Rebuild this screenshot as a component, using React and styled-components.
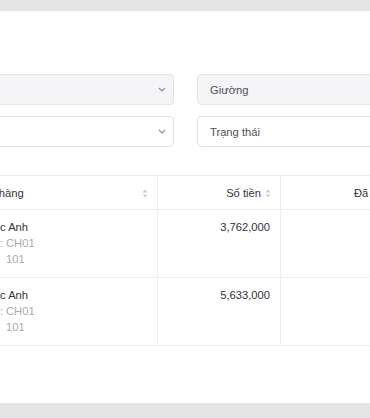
import styled, { createGlobalStyle } from "styled-components";

const GlobalStyle = createGlobalStyle`
  html, body {
    margin: 0;
    padding: 0;
  }
  body {
    width: 370px;
    height: 418px;
    overflow: hidden;
    background: #e4e4e6;
    font-family: "Liberation Sans", Arial, sans-serif;
    -webkit-font-smoothing: antialiased;
  }
`;

const Page = styled.div`
  box-sizing: border-box;
  height: 418px;
  padding-top: 11px;
`;

const Card = styled.div`
  box-sizing: border-box;
  height: 392px;
  padding-top: 63px;
  background: #fff;
  overflow: hidden;
`;

// the view is a crop of a wider page, so content starts left of the window
const Content = styled.div`
  margin-left: -46px;
  width: 560px;
`;

const Filters = styled.div`
  display: grid;
  grid-template-columns: 220px 220px;
  column-gap: 23px;
  row-gap: 11px;
`;

const Field = styled.div`
  box-sizing: border-box;
  height: 31px;
  display: flex;
  align-items: center;
  justify-content: space-between;
  padding: 0 7px 0 12px;
  border: 1px solid #e3e3e7;
  border-radius: 4px;
  background: ${(p) => (p.$muted ? "#f5f5f7" : "#fff")};
  font-size: 11.2px;
  color: #505055;
`;

const Table = styled.div`
  margin-top: 28px;
  display: grid;
  grid-template-columns: 204px 123px 126px;
  border-top: 1px solid #ededf0;
`;

const Cell = styled.div`
  padding: 9px 10px 10px;
  border-right: 1px solid #ededf0;
  border-bottom: 1px solid #ededf0;
  font-size: 11.2px;
  line-height: 16px;
  color: #333336;
  text-align: ${(p) => p.$align || "left"};
`;

const HeadCell = styled(Cell)`
  padding: 9px 9px 8px 10px;
  display: flex;
  align-items: center;
  gap: 4px;
  justify-content: ${(p) => (p.$align === "right" ? "flex-end" : "space-between")};
`;

const Sub = styled.div`
  display: flex;
  color: #a9a9ae;
`;

const Label = styled.span`
  min-width: 42px;
`;

const Chevron = () => (
  <svg width="8" height="5" viewBox="0 0 8 5">
    <path d="M1 1l3 3 3-3" fill="none" stroke="#8c8c91" strokeWidth="1.1" />
  </svg>
);

const Sort = () => (
  <svg width="6" height="9" viewBox="0 0 6 9">
    <path d="M3 0.5L5.6 3.4H0.4Z" fill="#cbcbd0" />
    <path d="M3 8.5L0.4 5.6H5.6Z" fill="#cbcbd0" />
  </svg>
);

const rows = [
  { name: "Lê Ngọc Anh", room: "CH01", bed: "101", amount: "3,762,000", paid: "0" },
  { name: "Lê Ngọc Anh", room: "CH01", bed: "101", amount: "5,633,000", paid: "0" },
];

const App = () => {
  return (
    <>
      <GlobalStyle />
      <Page>
        <Card>
          <Content>
            <Filters>
              <Field $muted>
                <span>Tòa</span>
                <Chevron />
              </Field>
              <Field $muted>Giường</Field>
              <Field>
                <span>Tháng</span>
                <Chevron />
              </Field>
              <Field>Trạng thái</Field>
            </Filters>
            <Table>
              <HeadCell>
                <span>Khách hàng</span>
                <Sort />
              </HeadCell>
              <HeadCell $align="right">
                <span>Số tiền</span>
                <Sort />
              </HeadCell>
              <HeadCell $align="right">
                <span>Đã thu</span>
                <Sort />
              </HeadCell>
              {rows.map((r, i) => [
                <Cell key={`n${i}`}>
                  <div>{r.name}</div>
                  <Sub>
                    <Label>Căn hộ:</Label>
                    {r.room}
                  </Sub>
                  <Sub>
                    <Label>Phòng</Label>
                    {r.bed}
                  </Sub>
                </Cell>,
                <Cell key={`a${i}`} $align="right">{r.amount}</Cell>,
                <Cell key={`p${i}`} $align="right">{r.paid}</Cell>,
              ])}
            </Table>
          </Content>
        </Card>
      </Page>
    </>
  );
};

export default App;
